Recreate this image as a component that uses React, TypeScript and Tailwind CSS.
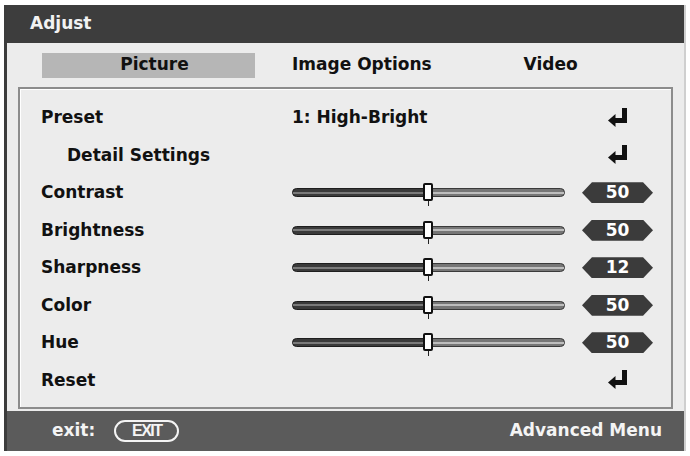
import type { ReactNode } from "react";

const font = "font-['DejaVu_Sans',sans-serif] font-bold";

function EnterIcon() {
  return (
    <svg width="22" height="20" viewBox="0 0 22 20" aria-hidden="true">
      <rect x="15" y="0" width="5" height="15" fill="#111" />
      <rect x="7" y="10" width="13" height="5" fill="#111" />
      <polygon points="1,12.5 8.5,6 8.5,19" fill="#111" />
    </svg>
  );
}

function Slider() {
  return (
    <div className="relative h-[9px] w-[273px]">
      <div className="flex h-full w-full">
        <div className="flex h-full w-[136px] items-center rounded-l-full border border-[#1e1e1e] bg-[#3a3a3a]">
          <div className="h-[2px] w-full bg-[#7a7a7a]" />
        </div>
        <div className="flex h-full flex-1 items-center rounded-r-full border border-[#3a3a3a] bg-[#767676]">
          <div className="h-[2px] w-full bg-[#bdbdbd]" />
        </div>
      </div>
      <div className="absolute left-[131px] top-[-5px] flex flex-col items-center">
        <div className="h-[18px] w-[10px] rounded-[2px] border-2 border-[#111] bg-white" />
        <div className="h-[5px] w-px bg-[#222]" />
      </div>
    </div>
  );
}

function Badge({ value }: { value: string }) {
  return (
    <div className="flex h-[21px] w-[71px] items-center justify-center bg-[#3b3b3b] text-[17px] leading-none font-semibold text-white [clip-path:polygon(0_50%,14%_0,86%_0,100%_50%,86%_100%,14%_100%)]">
      {value}
    </div>
  );
}

function Row({
  label,
  indent,
  middle,
  right,
}: {
  label: string;
  indent?: boolean;
  middle?: ReactNode;
  right?: ReactNode;
}) {
  return (
    <div className="flex h-[37.5px] items-center">
      <div className={indent ? "w-[272px] pl-[47px]" : "w-[272px] pl-[21px]"}>{label}</div>
      <div className="flex w-[290px] items-center">{middle}</div>
      <div className="flex w-[71px] items-center justify-center">{right}</div>
    </div>
  );
}

const sliders = [
  { label: "Contrast", value: "50" },
  { label: "Brightness", value: "50" },
  { label: "Sharpness", value: "12" },
  { label: "Color", value: "50" },
  { label: "Hue", value: "50" },
];

export default function App() {
  return (
    <div className={`h-[456px] w-[690px] bg-white pl-[4px] pt-[5px] text-[17px] text-[#111] ${font}`}>
      <div className="flex h-[446px] w-[682px] flex-col border-l-[3px] border-r-[2px] border-[#3c3c3c] border-r-[#cfcfcf] bg-[#ececec]">
        <div className="flex h-[38px] shrink-0 items-center bg-[#3d3d3d] pl-[23px] text-[#f2f2f2]">
          Adjust
        </div>

        <div className="flex h-[44px] shrink-0 items-center pl-[35px]">
          <div className="flex h-[25px] w-[213px] items-center justify-center bg-[#b6b6b6] pl-[12px]">
            Picture
          </div>
          <div className="ml-[37px]">Image Options</div>
          <div className="ml-[92px]">Video</div>
        </div>

        <div className="mx-[11px] flex-1 border-2 border-[#8c8c8c] pb-[8px] pt-[10px] shadow-[inset_1px_1px_0_#fff]">
          <Row label="Preset" middle={<span>1: High-Bright</span>} right={<EnterIcon />} />
          <Row label="Detail Settings" indent right={<EnterIcon />} />
          {sliders.map((s) => (
            <Row key={s.label} label={s.label} middle={<Slider />} right={<Badge value={s.value} />} />
          ))}
          <Row label="Reset" right={<EnterIcon />} />
        </div>

        <div className="mt-[2px] flex h-[40px] shrink-0 items-center bg-[#5b5b5b] pl-[45px] pr-[22px] text-[#f4f4f4]">
          <span>exit:</span>
          <span className="ml-[19px] flex h-[22px] w-[65px] items-center justify-center rounded-full border-2 border-[#f4f4f4] font-['Liberation_Sans',sans-serif] text-[16px] font-bold tracking-[-1.5px]">
            EXIT
          </span>
          <span className="ml-auto">Advanced Menu</span>
        </div>
      </div>
    </div>
  );
}
